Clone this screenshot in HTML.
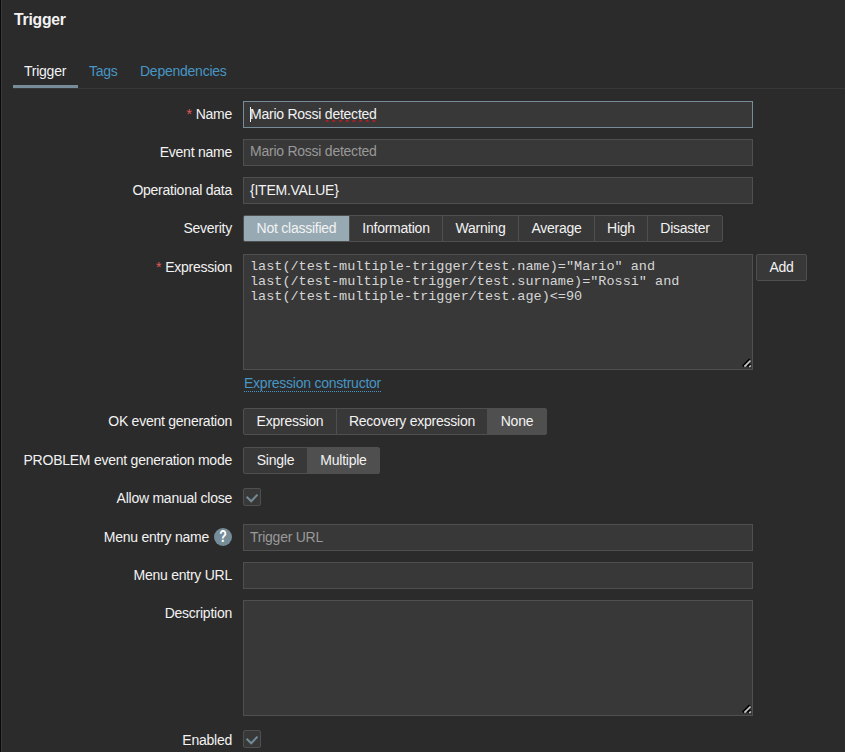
<!DOCTYPE html>
<html><head><meta charset="utf-8">
<style>
*{box-sizing:border-box}
html,body{margin:0;padding:0}
body{width:845px;height:752px;overflow:hidden;background:#2b2b2b;position:relative;font-family:"Liberation Sans",sans-serif;font-size:14px;letter-spacing:-0.245px;color:#f2f2f2}
.a{position:absolute;white-space:nowrap}
.edge0{left:0;top:0;width:1px;height:752px;background:#0a0a0a}
.edge1{left:1px;top:0;width:1px;height:752px;background:#393939}
.title{left:14px;top:11px;font-weight:bold;font-size:15.75px;line-height:18px}
.tabline{left:13px;top:88px;width:832px;height:1px;background:#383838}
.tabbar{left:13px;top:85px;width:65px;height:3px;background:#768d99}
.tab{top:63px;line-height:16px}
.lnk{color:#4796c4}
.lbl{right:613px;line-height:16px;text-align:right}
.req::before{content:"*";color:#e45959;margin-right:4px}
.inp{left:243px;width:510px;height:27px;background:#383838;border:1px solid #4f4f4f}
.inp span{position:absolute;left:6px;top:4px;line-height:16px;white-space:nowrap}
.ph{color:#999}
.focus{border-color:#768d99}
.ta{left:243px;width:510px;height:116px;background:#383838;border:1px solid #4f4f4f}
.rg{left:243px;height:27px;display:flex;border-radius:2px}
.rg div{height:27px;border:1px solid #4f4f4f;background:#383838;padding:0;text-align:center;line-height:25px;margin-left:-1px;flex:none}
.rg div:first-child{margin-left:0;border-radius:2px 0 0 2px}
.rg div:last-child{border-radius:0 2px 2px 0}
.rg div.sel{background:#4f4f4f}
.rg div.sev{background:#97aab3}
.btn{left:756px;top:254px;width:51px;height:27px;border:1px solid #4f4f4f;background:#383838;border-radius:2px;line-height:25px;text-align:center}
.cb{left:243px;width:18px;height:18px;border:1px solid #4f4f4f;background:#383838;border-radius:2px}
.mono{font-family:"Liberation Mono",monospace;font-size:13.5px;letter-spacing:0;color:#d6d6d6;line-height:15px;left:250px;top:259px;white-space:pre}
.help{left:214px;top:528px;width:18px;height:18px;border-radius:50%;background:#768d99}
.help span{position:absolute;left:0;width:18px;top:0px;color:#fff;font-weight:bold;font-size:14px;letter-spacing:0;line-height:15px;text-align:center;transform:scale(0.88,1.2);transform-origin:55% 0}
.exc{left:244px;top:375px;line-height:16px;color:#4796c4}
.exc span{border-bottom:1px dotted #4796c4}
</style></head><body>
<div class="a edge0"></div><div class="a edge1"></div>
<div class="a title">Trigger</div>
<div class="a tabline"></div>
<div class="a tabbar"></div>
<div class="a tab" style="left:24px">Trigger</div>
<div class="a tab lnk" style="left:89px">Tags</div>
<div class="a tab lnk" style="left:140px">Dependencies</div>

<div class="a lbl req" style="top:106px">Name</div>
<div class="a inp focus" style="top:101px"><span>Mario Rossi detected</span><div style="position:absolute;left:6px;top:5px;width:1px;height:15px;background:#f2f2f2"></div><svg width="56" height="3" style="position:absolute;left:81px;top:17px"><path d="M0.00,2.5 Q2.10,-0.5 4.20,2.5 Z" fill="#e01818"/><path d="M6.70,2.5 Q8.80,-0.5 10.90,2.5 Z" fill="#e01818"/><path d="M13.40,2.5 Q15.50,-0.5 17.60,2.5 Z" fill="#e01818"/><path d="M20.10,2.5 Q22.20,-0.5 24.30,2.5 Z" fill="#e01818"/><path d="M26.80,2.5 Q28.90,-0.5 31.00,2.5 Z" fill="#e01818"/><path d="M33.50,2.5 Q35.60,-0.5 37.70,2.5 Z" fill="#e01818"/><path d="M40.20,2.5 Q42.30,-0.5 44.40,2.5 Z" fill="#e01818"/><path d="M46.90,2.5 Q49.00,-0.5 51.10,2.5 Z" fill="#e01818"/></svg></div>

<div class="a lbl" style="top:144px">Event name</div>
<div class="a inp" style="top:139px"><span class="ph" style="top:3px">Mario Rossi detected</span></div>

<div class="a lbl" style="top:182px">Operational data</div>
<div class="a inp" style="top:177px"><span>{ITEM.VALUE}</span></div>

<div class="a lbl" style="top:220px">Severity</div>
<div class="a rg" style="top:215px"><div class="sev" style="width:107px">Not classified</div><div style="width:94px">Information</div><div style="width:77px">Warning</div><div style="width:77px">Average</div><div style="width:54px">High</div><div style="width:76px">Disaster</div></div>

<div class="a lbl req" style="top:259px">Expression</div>
<div class="a ta" style="top:254px"><svg width="12" height="12" style="position:absolute;right:0;bottom:0"><path d="M2.9,9.4 L9.9,2.4 M7.6,9.6 L10.2,7" stroke="#000" stroke-width="2.3" fill="none"/><path d="M4.4,9.6 L10.5,3.5 M9.2,10 L10.7,8.5" stroke="#c8c8c8" stroke-width="1.7" fill="none"/></svg></div>
<div class="a mono">last(/test-multiple-trigger/test.name)="Mario" and
last(/test-multiple-trigger/test.surname)="Rossi" and
last(/test-multiple-trigger/test.age)&lt;=90</div>
<div class="a btn">Add</div>
<div class="a exc"><span>Expression constructor</span></div>

<div class="a lbl" style="top:413px">OK event generation</div>
<div class="a rg" style="top:408px"><div style="width:94px">Expression</div><div style="width:152px">Recovery expression</div><div class="sel" style="width:60px">None</div></div>

<div class="a lbl" style="top:452px">PROBLEM event generation mode</div>
<div class="a rg" style="top:447px"><div style="width:65px">Single</div><div class="sel" style="width:73px">Multiple</div></div>

<div class="a lbl" style="top:490px">Allow manual close</div>
<div class="a cb" style="top:488px"><svg width="18" height="18" style="position:absolute;left:-1px;top:-1px"><polyline points="3.6,8.8 8.2,13.2 14.5,6.6" fill="none" stroke="#728a96" stroke-width="2.1"/></svg></div>

<div class="a lbl" style="top:529px;right:636px">Menu entry name</div>
<div class="a help"><span>?</span></div>
<div class="a inp" style="top:524px"><span class="ph">Trigger URL</span></div>

<div class="a lbl" style="top:567px">Menu entry URL</div>
<div class="a inp" style="top:562px"></div>

<div class="a lbl" style="top:605px">Description</div>
<div class="a ta" style="top:600px"><svg width="12" height="12" style="position:absolute;right:0;bottom:0"><path d="M2.9,9.4 L9.9,2.4 M7.6,9.6 L10.2,7" stroke="#000" stroke-width="2.3" fill="none"/><path d="M4.4,9.6 L10.5,3.5 M9.2,10 L10.7,8.5" stroke="#c8c8c8" stroke-width="1.7" fill="none"/></svg></div>

<div class="a lbl" style="top:732px">Enabled</div>
<div class="a cb" style="top:730px"><svg width="18" height="18" style="position:absolute;left:-1px;top:-1px"><polyline points="3.6,8.8 8.2,13.2 14.5,6.6" fill="none" stroke="#728a96" stroke-width="2.1"/></svg></div>
</body></html>
